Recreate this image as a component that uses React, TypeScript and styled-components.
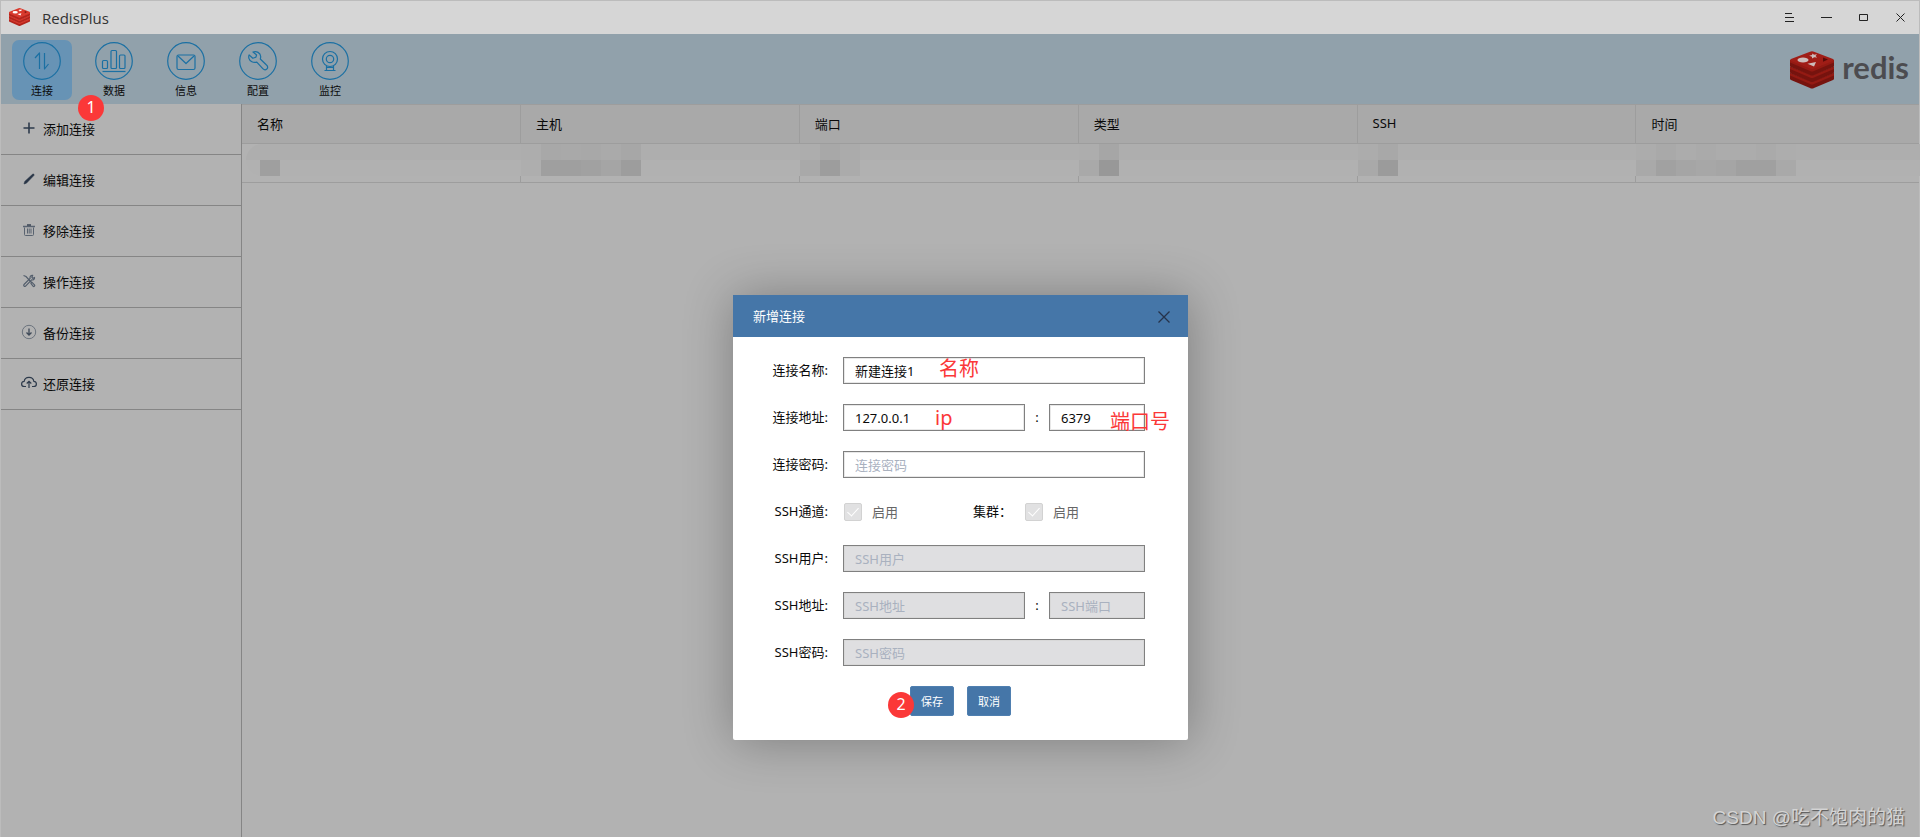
import React from 'react';
import styled, { createGlobalStyle } from 'styled-components';

const GlobalStyle = createGlobalStyle`
  * { box-sizing: border-box; }
  body { margin: 0; background: #b2b2b2; }
  body, button, input {
    font-family: "Noto Sans", "Noto Sans CJK SC", sans-serif;
    font-size: 13px;
    color: #0a0a0a;
  }
`;

const Window = styled.div`
  position: relative;
  display: flex;
  flex-direction: column;
  min-height: 100vh;
  background: #b2b2b2;
  border: 1px solid #bcbcbc;
  border-bottom: 0;
`;

const TitleBar = styled.header`
  display: flex;
  align-items: center;
  height: 33px;
  padding-left: 8px;
  background: #d6d6d6;
`;

const AppName = styled.h1`
  flex: 1;
  margin: 0 0 0 12px;
  font: 400 15px/20px "Open Sans", "Noto Sans", sans-serif;
  color: #333;
`;

const WindowButton = styled.button`
  display: flex;
  align-items: center;
  justify-content: center;
  width: 37px;
  height: 32px;
  padding: 0;
  border: 0;
  background: none;
`;

const Toolbar = styled.nav`
  display: flex;
  align-items: center;
  gap: 12px;
  height: 70px;
  padding: 1px 10px 0 11px;
  background: #91a1ab;
`;

const ToolButton = styled.button<{ $active?: boolean }>`
  display: flex;
  flex-direction: column;
  align-items: center;
  width: 60px;
  height: 60px;
  padding: 2px 0 0;
  border: 0;
  border-radius: 7px;
  background: ${p => (p.$active ? '#6793b5' : 'transparent')};
  font-size: 11px;
  line-height: 16px;
  svg { margin-bottom: 3px; flex: none; }
`;

const Brand = styled.div`
  display: flex;
  align-items: center;
  gap: 8px;
  margin-left: auto;
  font: 700 31px/36px Lato, sans-serif;
  color: #4c4c50;
  span { padding-bottom: 6px; }
`;

const Body = styled.div`
  display: flex;
  flex: 1;
`;

const Sidebar = styled.aside`
  width: 241px;
  flex: none;
  border-right: 1px solid #858585;
`;

const SideButton = styled.button`
  display: flex;
  align-items: center;
  gap: 6px;
  width: 100%;
  height: 51px;
  padding: 0 0 2px 20px;
  border: 0;
  border-bottom: 1px solid #858585;
  background: none;
`;

const Main = styled.main`
  flex: 1;
  min-width: 0;
`;

const Table = styled.table`
  width: 100%;
  table-layout: fixed;
  border-collapse: separate;
  border-spacing: 0;
`;

const HeadCell = styled.th`
  width: 16.63%;
  height: 40px;
  padding: 0 15px 2px;
  border: solid #9d9d9d;
  border-width: 1px 1px 1px 0;
  background: #a9a9a9;
  font-weight: 400;
  text-align: left;
  &:last-child { width: auto; border-right: 0; }
`;

const Cell = styled.td`
  height: 39px;
  padding: 0;
  vertical-align: top;
  border: solid #9d9d9d;
  border-width: 0 1px 1px 0;
  &:last-child { border-right: 0; }
`;

const Mosaic = styled.div<{ $first?: boolean }>`
  display: flex;
  position: relative;
  height: 32px;
  margin: 0 -1px 0 ${p => (p.$first ? '4px' : '0')};
  border-radius: ${p => (p.$first ? '16px 0 0 16px' : '0')};
  background: linear-gradient(#aeaeae 16px, #b1b1b1 16px);
`;

const Tile = styled.i<{ $top: string; $bottom: string }>`
  width: 20px;
  background: linear-gradient(${p => p.$top} 16px, ${p => p.$bottom} 16px);
`;

const FirstGap = styled.i`
  width: 14px;
`;

const ModalLayer = styled.div`
  position: absolute;
  inset: 0;
  display: flex;
  justify-content: center;
  align-items: flex-start;
  padding: 294px 0 0 1px;
`;

const Dialog = styled.section`
  position: relative;
  width: 455px;
  background: #fff;
  border-radius: 2px;
  box-shadow: 1px 1px 50px rgba(0, 0, 0, 0.3);
`;

const DialogHeader = styled.header`
  display: flex;
  align-items: center;
  justify-content: space-between;
  height: 42px;
  padding: 0 12px 0 20px;
  background: #4576a8;
  color: #fff;
  h2 { margin: 0; padding-bottom: 2px; font-size: 13px; font-weight: 400; }
`;

const CloseButton = styled.button`
  display: flex;
  padding: 6px 5px 5px;
  border: 0;
  background: none;
`;

const Form = styled.form`
  display: flex;
  flex-direction: column;
  gap: 20px;
  padding: 20px 0 24px;
`;

const Row = styled.div`
  display: flex;
  align-items: center;
  height: 27px;
  padding-right: 43px;
`;

const Label = styled.label`
  width: 95px;
  margin-right: 15px;
  padding-bottom: 2px;
  text-align: right;
`;

const Input = styled.input`
  flex: 1;
  min-width: 0;
  height: 27px;
  padding: 0 11px;
  border: 1px solid #808080;
  border-radius: 0;
  background: #fff;
  box-shadow: inset 0 0 0 1px #e8e8e8;
  outline: none;
  &::placeholder { color: #a9b1bf; opacity: 1; }
  &:disabled { background: #dfdfe1; box-shadow: inset 0 0 0 1px #d8d8d8; }
`;

const PortInput = styled(Input)`
  flex: 0 0 96px;
`;

const Colon = styled.span`
  width: 24px;
  padding-bottom: 2px;
  text-align: center;
`;

const CheckLabel = styled.label`
  display: flex;
  align-items: center;
  gap: 10px;
  color: #666;
`;

const CheckBox = styled.input`
  appearance: none;
  display: flex;
  justify-content: center;
  width: 18px;
  height: 18px;
  margin: 0 0 0 1px;
  border: 1px solid #d2d2d2;
  border-radius: 2px;
  background: #e1e1e2;
  &:checked::after {
    content: "";
    width: 5px;
    height: 10px;
    margin-top: 1px;
    border: solid #fff;
    border-width: 0 1px 1px 0;
    transform: rotate(42deg);
  }
`;

const ClusterLabel = styled.label`
  margin: 0 12px 0 75px;
  padding-bottom: 2px;
`;

const Actions = styled.div`
  display: flex;
  justify-content: center;
  gap: 13px;
`;

const ActionButton = styled.button`
  width: 44px;
  height: 30px;
  padding: 0;
  border: 1px solid #4f7fb0;
  border-radius: 2px;
  background: #4576a8;
  color: #fff;
  font-size: 11px;
`;

const Badge = styled.span<{ $x: number; $y: number }>`
  position: absolute;
  left: ${p => p.$x}px;
  top: ${p => p.$y}px;
  width: 26px;
  height: 26px;
  border-radius: 50%;
  background: #fb3838;
  color: #fff;
  font-size: 16px;
  line-height: 24px;
  text-align: center;
`;

const Note = styled.span<{ $x: number; $y: number }>`
  position: absolute;
  left: ${p => p.$x}px;
  top: ${p => p.$y}px;
  color: #fb3838;
  font-size: 20px;
  line-height: 24px;
  white-space: nowrap;
`;

const Watermark = styled.div`
  position: absolute;
  right: 14px;
  bottom: 4px;
  color: #d4d4d4;
  font: 400 19px/30px "Liberation Sans", "Noto Sans CJK SC", sans-serif;
  text-shadow: 1px 1px 1px #555;
`;

const cubeColors = {
  dark: { side: '#76130e', edge: '#941a13', top: '#a01d16', mark: '#cdbdbb', pit: '#5a0a08' },
  bright: { side: '#b3241b', edge: '#d83a2e', top: '#d9392c', mark: '#ffffff', pit: '#7c140e' },
};

const RedisCube = ({ width, tone }: { width: number; tone: keyof typeof cubeColors }) => {
  const c = cubeColors[tone];
  return (
    <svg width={width} viewBox="0 0 44 38" aria-hidden="true">
      {[22, 15.500, 9].map(y => (
        <g key={y}>
          <path d={`M0 ${y}L20 ${y + 8}q2 1 4 0L44 ${y}v5.500q0 1-1 1.500L24 ${y + 15}q-2 1-4 0L1 ${y + 7}q-1-.5-1-1.500z`} fill={c.side} />
          <path d={`M0 ${y}L20 ${y + 8}q2 1 4 0L44 ${y}v2.500L24 ${y + 11}q-2 1-4 0L0 ${y + 2.500}z`} fill={c.edge} />
        </g>
      ))}
      <path d="M1 8L20 .7q2-.9 4 0L43 8q1.500 1 0 2L24 17.500q-2 1-4 0L1 10q-1.500-1 0-2z" fill={c.top} />
      <ellipse cx="13" cy="9" rx="5.500" ry="2.500" fill={c.mark} />
      <path d="M22.500 2.500l1.500 1.300 3-.5-1.500 1.700 1.700 1.500-3-.2-2.200 1.200v-1.800l-2.800-.9 2.800-.8z" fill={c.mark} />
      <path d="M17.500 12.700l8.500-1.700-2 4.500z" fill={c.mark} />
      <path d="M33 6.500l5 2-5 2.300z" fill={c.pit} />
    </svg>
  );
};

const toolIcons: Record<string, React.ReactNode> = {
  连接: (
    <>
      <path d="M12 16l4.500-5v16" />
      <path d="M21.500 11v16l4-5" />
    </>
  ),
  数据: (
    <>
      <rect x="7.500" y="18.500" width="5" height="8" rx="1" />
      <rect x="16" y="8.500" width="5.500" height="18" rx="1" />
      <rect x="24.500" y="13" width="5.500" height="13.500" rx="1" />
      <path d="M7.500 29.500h23" />
    </>
  ),
  信息: (
    <>
      <rect x="10" y="13" width="18" height="14.500" rx="1.500" />
      <path d="M11 14l8 7.500 8-7.500" />
    </>
  ),
  配置: (
    <path d="M14 10c3.500-1.300 7.500.8 7.700 4.500 0 1-.1 1.700-.4 2.500l6.200 6c1.300 1.200 1.400 2.800.3 4-1.200 1.100-2.800.9-4-.4l-6-6.500c-3.500 1-7-.7-7.900-3.800-.3-1.200-.2-2.300.2-3.400l3.700 3.300 3-1 .8-2.200z" />
  ),
  监控: (
    <>
      <circle cx="19" cy="17" r="7.500" />
      <circle cx="19" cy="17" r="3.700" />
      <path d="M15.500 24v4M22.500 24v4M13.500 28.500h11M15.500 25.500h7" />
    </>
  ),
};

const ToolIcon = ({ name }: { name: string }) => (
  <svg width="38" height="38" viewBox="0 0 38 38" fill="none" stroke="#1b70a3" strokeWidth="1.200" strokeLinejoin="round">
    <circle cx="19" cy="19" r="18.300" />
    {toolIcons[name]}
  </svg>
);

const sideItems: [string, React.ReactNode][] = [
  ['添加连接', <path d="M8 2.500v11M2.500 8h11" strokeWidth="1.600" />],
  ['编辑连接', (
    <path d="M3 13l.7-2.500 7.800-7.200c.5-.4 1-.4 1.400 0s.3.900-.1 1.300L5.400 12.200z" fill="#283446" strokeWidth="0.600" />
  )],
  ['移除连接', (
    <g stroke="#596370">
      <path d="M2 4.500h12" strokeWidth="1.500" />
      <path d="M6 3h4" strokeWidth="1.300" stroke="#283446" />
      <path d="M3.500 5.500v7q0 1 1 1h7q1 0 1-1v-7M6.500 6.500v5M8.200 6.500v5M10 6.500v5" strokeWidth="1" />
    </g>
  )],
  ['操作连接', (
    <g stroke="#535e6c" strokeWidth="1.200">
      <path d="M2.500 2.500l2.500 1 5.500 6M10 10.500l1-1.200 2.500 2.500c.8.800-.5 2.200-1.300 1.500z" />
      <path d="M13.500 4.500l-1.800.7-.8-.8.700-2c-1.800-.2-3 1.300-2.500 3L3 11.500c-.9 1 .5 2.600 1.600 1.600l6-6.200c1.600.4 3.100-.7 2.900-2.400z" />
    </g>
  )],
  ['备份连接', (
    <g stroke="#596370">
      <circle cx="8" cy="8" r="6.700" strokeWidth="0.800" />
      <path d="M8 4.500v6.300M5.500 8.500L8 11l2.500-2.500" strokeWidth="1.300" stroke="#3e4958" />
    </g>
  )],
  ['还原连接', (
    <path d="M5 11.500H3.500C1.700 11.500.6 10.300.6 8.900S1.700 6.400 3.200 6.300C3.500 3.800 5.500 2.300 8 2.300s4.500 1.500 4.800 4c1.500.1 2.600 1.200 2.600 2.600s-1.100 2.600-2.900 2.600H11M8 13V6.500M5.700 8.500L8 6.300l2.300 2.200" strokeWidth="1.200" />
  )],
];

type Shade = [string, string];
const columns: { title: string; tiles: Shade[] }[] = [
  { title: '名称', tiles: [['#adadad', '#aeaeae'], ['#aeaeae', '#9f9f9f']] },
  {
    title: '主机',
    tiles: [['#adadad', '#aeaeae'], ['#a8a8a8', '#9f9f9f'], ['#a9a9a9', '#9f9f9f'], ['#a8a8a8', '#a1a1a1'], ['#aaaaaa', '#a5a5a5'], ['#a7a7a7', '#9d9d9d']],
  },
  { title: '端口', tiles: [['#adadad', '#a9a9a9'], ['#a8a8a8', '#9d9d9d'], ['#ababab', '#ababab']] },
  { title: '类型', tiles: [['#adadad', '#a9a9a9'], ['#a6a6a6', '#989898']] },
  { title: 'SSH', tiles: [['#acacac', '#a9a9a9'], ['#a8a8a8', '#9b9b9b']] },
  {
    title: '时间',
    tiles: [['#acacac', '#a9a9a9'], ['#a9a9a9', '#a1a1a1'], ['#acacac', '#a5a5a5'], ['#aaaaaa', '#a7a7a7'], ['#acacac', '#a5a5a5'], ['#acacac', '#a0a0a0'], ['#aaaaaa', '#a0a0a0'], ['#adadad', '#a9a9a9']],
  },
];

const windowControls: [string, string][] = [
  ['菜单', 'M1 1.500h7M1 5.500h9M1 9.500h9'],
  ['最小化', 'M0 5.500h11'],
  ['最大化', 'M1.500 2.500h8v6h-8z'],
  ['关闭', 'M1.500 1.500l8 8M9.500 1.500l-8 8'],
];

export default function App() {
  return (
    <>
      <GlobalStyle />
      <Window>
        <TitleBar>
          <RedisCube width={21} tone="bright" />
          <AppName>RedisPlus</AppName>
          {windowControls.map(([name, d]) => (
            <WindowButton key={name} aria-label={name}>
              <svg width="11" height="11" viewBox="0 0 11 11" fill="none" stroke="#222"><path d={d} /></svg>
            </WindowButton>
          ))}
        </TitleBar>

        <Toolbar>
          {Object.keys(toolIcons).map((name, i) => (
            <ToolButton key={name} $active={i === 0}>
              <ToolIcon name={name} />
              {name}
            </ToolButton>
          ))}
          <Brand>
            <RedisCube width={44} tone="dark" />
            <span>redis</span>
          </Brand>
        </Toolbar>

        <Body>
          <Sidebar>
            {sideItems.map(([name, icon]) => (
              <SideButton key={name}>
                <svg width="16" height="16" viewBox="0 0 16 16" fill="none" stroke="#2d3a4b">{icon}</svg>
                {name}
              </SideButton>
            ))}
          </Sidebar>
          <Main>
            <Table>
              <thead>
                <tr>{columns.map(c => <HeadCell key={c.title} scope="col">{c.title}</HeadCell>)}</tr>
              </thead>
              <tbody>
                <tr>
                  {columns.map((c, i) => (
                    <Cell key={c.title}>
                      <Mosaic $first={i === 0}>
                        {c.tiles.map(([top, bottom], t) => (
                          (i > 0 || t > 0) ? <Tile key={t} $top={top} $bottom={bottom} /> : <FirstGap key={t} />
                        ))}
                      </Mosaic>
                    </Cell>
                  ))}
                </tr>
              </tbody>
            </Table>
          </Main>
        </Body>

        <Badge $x={77} $y={94}>1</Badge>
        <Watermark>CSDN @吃不饱肉的猫</Watermark>

        <ModalLayer>
          <Dialog role="dialog" aria-labelledby="dialog-title">
            <DialogHeader>
              <h2 id="dialog-title">新增连接</h2>
              <CloseButton aria-label="关闭">
                <svg width="14" height="14" viewBox="0 0 14 14" stroke="#26334a" strokeWidth="1.300"><path d="M1.500 1.500l11 11M12.500 1.500l-11 11" /></svg>
              </CloseButton>
            </DialogHeader>
            <Form onSubmit={e => e.preventDefault()}>
              <Row>
                <Label htmlFor="name">连接名称:</Label>
                <Input id="name" defaultValue="新建连接1" />
              </Row>
              <Row>
                <Label htmlFor="host">连接地址:</Label>
                <Input id="host" defaultValue="127.0.0.1" />
                <Colon>:</Colon>
                <PortInput aria-label="端口" defaultValue="6379" />
              </Row>
              <Row>
                <Label htmlFor="password">连接密码:</Label>
                <Input id="password" type="password" placeholder="连接密码" />
              </Row>
              <Row>
                <Label htmlFor="ssh">SSH通道:</Label>
                <CheckLabel><CheckBox id="ssh" type="checkbox" defaultChecked disabled />启用</CheckLabel>
                <ClusterLabel htmlFor="cluster">集群：</ClusterLabel>
                <CheckLabel><CheckBox id="cluster" type="checkbox" defaultChecked disabled />启用</CheckLabel>
              </Row>
              <Row>
                <Label htmlFor="ssh-user">SSH用户:</Label>
                <Input id="ssh-user" placeholder="SSH用户" disabled />
              </Row>
              <Row>
                <Label htmlFor="ssh-host">SSH地址:</Label>
                <Input id="ssh-host" placeholder="SSH地址" disabled />
                <Colon>:</Colon>
                <PortInput aria-label="SSH端口" placeholder="SSH端口" disabled />
              </Row>
              <Row>
                <Label htmlFor="ssh-password">SSH密码:</Label>
                <Input id="ssh-password" type="password" placeholder="SSH密码" disabled />
              </Row>
              <Actions>
                <ActionButton type="submit">保存</ActionButton>
                <ActionButton type="button">取消</ActionButton>
              </Actions>
            </Form>
            <Note $x={206} $y={62}>名称</Note>
            <Note $x={202} $y={111}>ip</Note>
            <Note $x={377} $y={115}>端口号</Note>
            <Badge $x={155} $y={397}>2</Badge>
          </Dialog>
        </ModalLayer>
      </Window>
    </>
  );
}
